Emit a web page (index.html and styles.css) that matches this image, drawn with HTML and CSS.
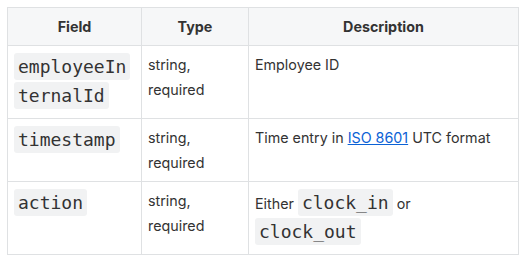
FILE: index.html
```html
<!DOCTYPE html>
<html lang="en">
  <head>
    <meta charset="UTF-8" />
    <meta name="viewport" content="width=device-width, initial-scale=1.0" />
    <title>Clock API fields</title>
    <link rel="stylesheet" href="styles.css">
  </head>
  <body>
    <table class="fields-table">
      <thead>
        <tr>
          <th class="col-field">Field</th>
          <th class="col-type">Type</th>
          <th class="col-desc">Description</th>
        </tr>
      </thead>
      <tbody>
        <tr class="row-tall">
          <td><code>employeeInternalId</code></td>
          <td>string, required</td>
          <td>Employee ID</td>
        </tr>
        <tr class="row-short">
          <td><code>timestamp</code></td>
          <td>string, required</td>
          <td>Time entry in <a href="#">ISO 8601</a> UTC format</td>
        </tr>
        <tr class="row-tall">
          <td><code>action</code></td>
          <td>string, required</td>
          <td>Either <code>clock_in</code> or <code>clock_out</code></td>
        </tr>
      </tbody>
    </table>
  </body>
</html>
```

FILE: styles.css
```css
body {
  margin: 7px;
  font-family: Inter, "Noto Sans", sans-serif;
  font-size: 14.3px;
  line-height: 25px;
  color: #333;
  background: #fff;
}

.fields-table {
  border-collapse: collapse;
  width: 512px;
  table-layout: fixed;
}

.fields-table th,
.fields-table td {
  border: 1px solid #dfe1e3;
  padding: 6px;
  vertical-align: top;
  text-align: left;
}

.fields-table th {
  background: #f6f7f8;
  font-weight: 700;
  text-align: center;
  height: 25px;
  vertical-align: middle;
}

.col-field {
  width: 121px;
}

.col-type {
  width: 94px;
}

.row-tall td {
  height: 60px;
}

.row-short td {
  height: 49px;
}

code {
  font-family: "DejaVu Sans Mono", "Liberation Mono", monospace;
  font-size: 18px;
  line-height: 29px;
  background: #f1f2f3;
  border-radius: 3px;
  padding: 3px 4px;
  overflow-wrap: anywhere;
  color: #333;
  box-decoration-break: clone;
  -webkit-box-decoration-break: clone;
}

a {
  color: #0b62d6;
  text-decoration: underline;
}
```
